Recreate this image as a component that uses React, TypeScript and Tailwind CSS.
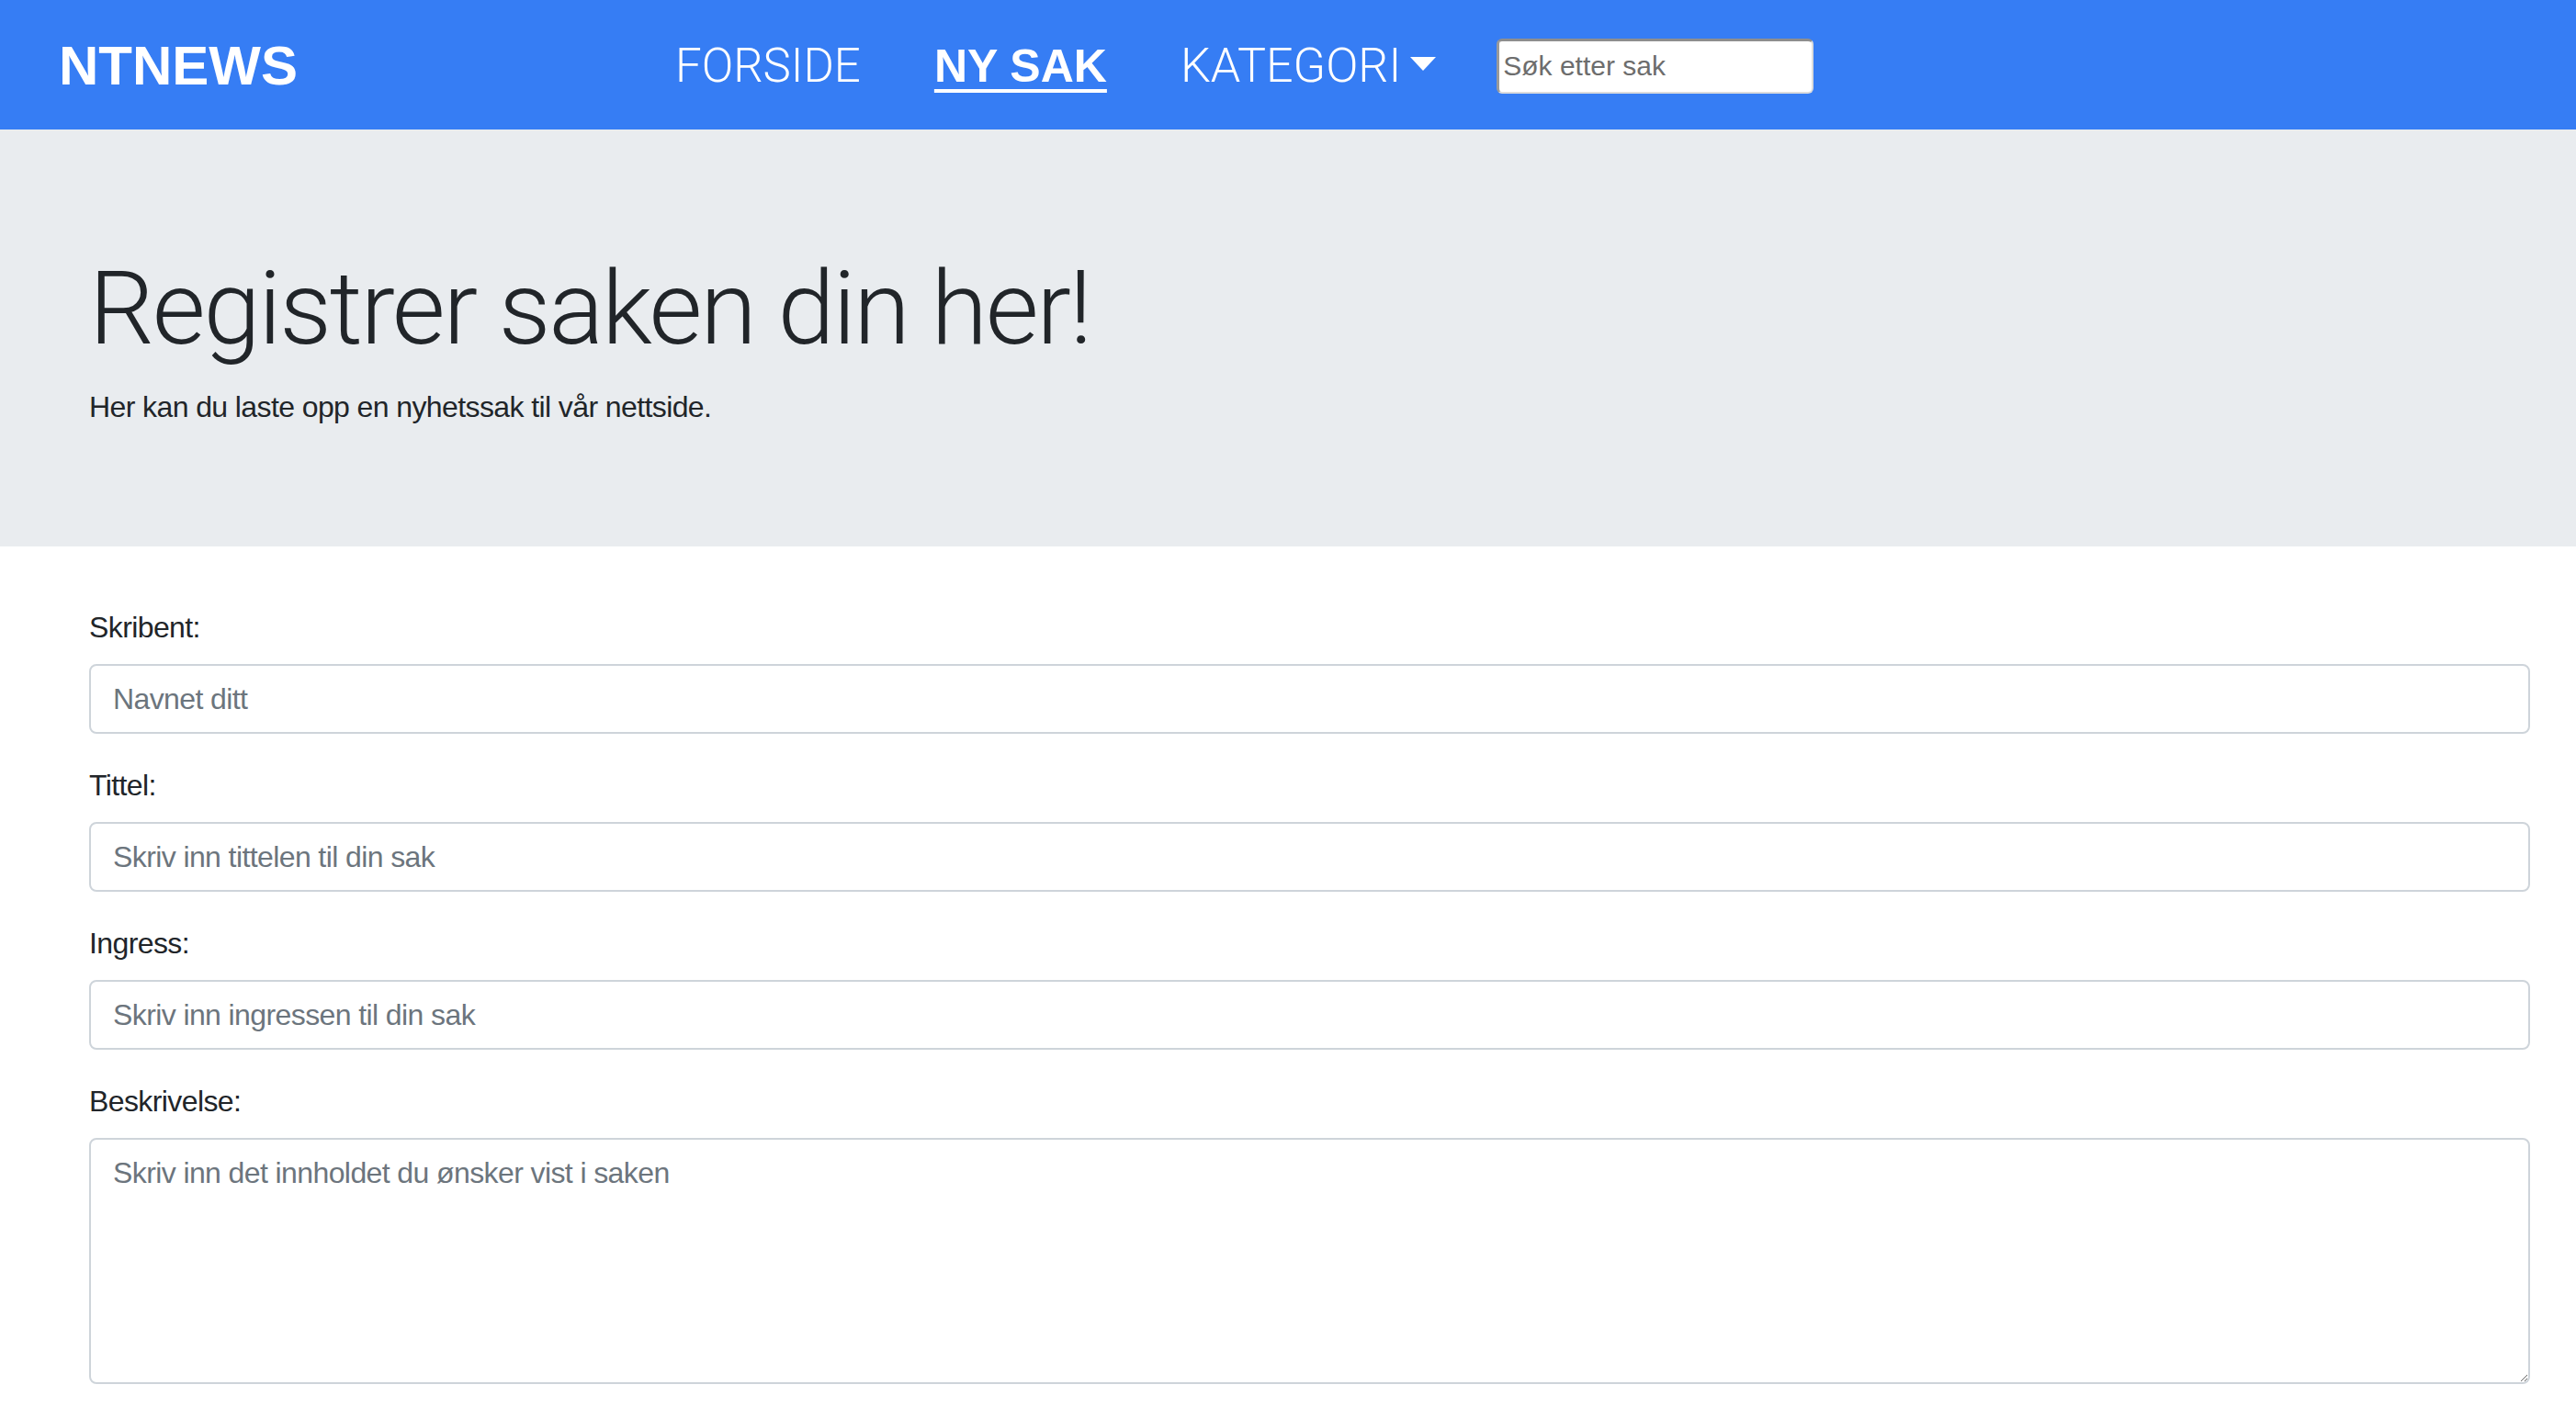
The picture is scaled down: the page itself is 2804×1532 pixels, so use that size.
import React from "react";

export default function App() {
  return (
    <div className="min-h-screen bg-white font-['Liberation_Sans',Arial,sans-serif] text-[#212529]">
      <nav className="h-[141px] bg-[#367df4] flex items-center pl-[64px]">
        <span className="text-[60px] font-bold text-white leading-none tracking-[0px] mt-[2px]">NTNEWS</span>
        <ul className="flex items-center ml-[371px] mt-[2px]">
          <li className="px-[40px]">
            <a className="font-['Roboto',sans-serif] font-light text-[51px] text-white leading-none">FORSIDE</a>
          </li>
          <li className="px-[40px]">
            <a className="font-bold text-[50px] text-white leading-none underline decoration-[4px] underline-offset-[8px]">NY SAK</a>
          </li>
          <li className="pl-[40px] pr-[48px] flex items-center">
            <a className="font-['Roboto',sans-serif] font-light text-[52px] text-white leading-none">KATEGORI</a>
            <svg width="28" height="15" viewBox="0 0 28 15" className="ml-[10px] mt-[-4px]">
              <polygon points="0,0 28,0 14,15" fill="white" />
            </svg>
          </li>
        </ul>
        <input
          type="text"
          placeholder="Søk etter sak"
          className="ml-[18px] mt-[2px] w-[345px] h-[60px] bg-white rounded-[6px] border-t-[3px] border-l-[3px] border-r-[2px] border-b-[2px] border-t-[#8e8e8e] border-l-[#9a9a9a] border-r-[#dcdcdc] border-b-[#dcdcdc] pl-[4px] text-[30px] outline-none placeholder:text-[#6d6d6d] font-['Liberation_Sans',Arial,sans-serif]"
        />
      </nav>

      <section className="bg-[#e9ecef] pt-[128px] pb-[128px] pl-[97px] pr-[50px] mb-[64px]">
        <h1 className="font-['Roboto',sans-serif] font-light text-[112px] leading-[1.2] mb-[16px] tracking-[-2.3px] text-[#212529]">
          Registrer saken din her!
        </h1>
        <p className="text-[32px] leading-[48px] tracking-[-0.6px] text-[#212529]">
          Her kan du laste opp en nyhetssak til vår nettside.
        </p>
      </section>

      <form className="pl-[97px] pr-[50px] tracking-[-0.6px]">
        <div className="mb-[32px]">
          <label className="block text-[32px] leading-[48px] mb-[16px]">Skribent:</label>
          <input
            type="text"
            placeholder="Navnet ditt"
            className="block w-full h-[76px] border-2 border-[#ced4da] rounded-[8px] px-[24px] text-[32px] tracking-[-0.6px] outline-none placeholder:text-[#6c757d] font-['Liberation_Sans',Arial,sans-serif]"
          />
        </div>
        <div className="mb-[32px]">
          <label className="block text-[32px] leading-[48px] mb-[16px]">Tittel:</label>
          <input
            type="text"
            placeholder="Skriv inn tittelen til din sak"
            className="block w-full h-[76px] border-2 border-[#ced4da] rounded-[8px] px-[24px] text-[32px] tracking-[-0.6px] outline-none placeholder:text-[#6c757d] font-['Liberation_Sans',Arial,sans-serif]"
          />
        </div>
        <div className="mb-[32px]">
          <label className="block text-[32px] leading-[48px] mb-[16px]">Ingress:</label>
          <input
            type="text"
            placeholder="Skriv inn ingressen til din sak"
            className="block w-full h-[76px] border-2 border-[#ced4da] rounded-[8px] px-[24px] text-[32px] tracking-[-0.6px] outline-none placeholder:text-[#6c757d] font-['Liberation_Sans',Arial,sans-serif]"
          />
        </div>
        <div className="mb-[32px]">
          <label className="block text-[32px] leading-[48px] mb-[16px]">Beskrivelse:</label>
          <textarea
            placeholder="Skriv inn det innholdet du ønsker vist i saken"
            className="block w-full h-[268px] border-2 border-[#ced4da] rounded-[8px] px-[24px] py-[12px] text-[32px] leading-[48px] tracking-[-0.6px] outline-none placeholder:text-[#6c757d] font-['Liberation_Sans',Arial,sans-serif]"
          />
        </div>
      </form>
    </div>
  );
}
